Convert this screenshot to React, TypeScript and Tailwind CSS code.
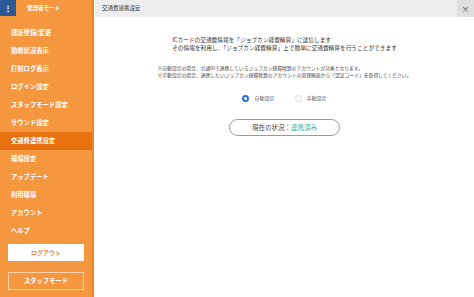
import * as React from "react";

const menuItems = [
    "認証登録/変更",
    "勤務状況表示",
    "打刻ログ表示",
    "ログイン設定",
    "スタッフモード設定",
    "サウンド設定",
    "交通費連携設定",
    "環境設定",
    "アップデート",
    "利用環境",
    "アカウント",
    "ヘルプ",
];

const ACTIVE = "交通費連携設定";

const Radio: React.FC<{ checked: boolean; label: string }> = ({ checked, label }) => (
    <div className="flex items-center gap-[5px]">
        {checked ? (
            <span className="w-[7px] h-[7px] rounded-full border-[2px] border-[#2a72d0] bg-white" />
        ) : (
            <span className="w-[7px] h-[7px] rounded-full border border-[#d6d6d6] bg-white" />
        )}
        <span className="text-[5px] leading-[8px] text-[#555]">{label}</span>
    </div>
);

export default function App() {
    return (
        <div
            className="w-[474px] h-[297px] flex overflow-hidden bg-white"
            style={{ fontFamily: '"Noto Sans CJK JP", "Noto Sans", sans-serif' }}
        >
            {/* sidebar */}
            <div className="w-[94px] h-full flex flex-col bg-[#f5973f] border-r-2 border-[#e9852c]">
                <div className="h-[16px] flex items-center">
                    <div className="w-[16px] h-[16px] bg-[#2d5896] flex items-center justify-center text-white text-[8px] leading-none font-bold">
                        ⋮
                    </div>
                    <span className="ml-[11px] text-[5.5px] text-white font-bold">管理者モード</span>
                </div>
                <div className="pt-[8px] flex flex-col">
                    {menuItems.map((item) => (
                        <div
                            key={item}
                            className={
                                "h-[18px] flex items-center pl-[11px] text-[6.3px] text-white font-bold " +
                                (item === ACTIVE ? "bg-[#e7700f]" : "")
                            }
                        >
                            {item}
                        </div>
                    ))}
                </div>
                <div className="mt-[4px] mx-[8px] h-[17px] bg-white flex items-center justify-center text-[6px] text-[#f08a2e] font-bold">
                    ログアウト
                </div>
                <div className="mt-[11px] mx-[8px] h-[18px] border border-[#fcd3ad] flex items-center justify-center text-[6.3px] text-white font-bold">
                    スタッフモード
                </div>
            </div>

            {/* content */}
            <div className="flex-1 flex flex-col ml-[1px]">
                <div className="h-[17px] bg-[#ededed] flex items-center justify-between">
                    <span className="pl-[7px] text-[5.5px] text-[#333]">交通費連携設定</span>
                    <div className="w-[17px] h-[17px] bg-[#dedede] flex items-center justify-center text-[8px] text-[#444] leading-none">
                        ×
                    </div>
                </div>
                <div className="flex flex-col items-center">
                    <div className="mt-[19px] text-[5.7px] leading-[8px] text-[#333] text-left">
                        <div>ICカードの交通費情報を「ジョブカン経費精算」に送信します</div>
                        <div>その情報を利用し、「ジョブカン経費精算」上で簡単に交通費精算を行うことができます</div>
                    </div>
                    <div className="mt-[12px] text-[4.8px] leading-[7px] text-[#444] text-left">
                        <div>※自動設定の場合、共通IDで連携しているジョブカン経費精算のアカウントが対象となります。</div>
                        <div>※手動設定の場合、連携したいジョブカン経費精算のアカウントの管理画面から「認証コード」を取得してください。</div>
                    </div>
                    <div className="mt-[16px] flex items-center gap-[20px]">
                        <Radio checked label="自動設定" />
                        <Radio checked={false} label="手動設定" />
                    </div>
                    <div className="mt-[17px] w-[111px] h-[17px] rounded-full border border-[#9a9a9a] flex items-center justify-center text-[6.5px] text-[#444]">
                        <span>現在の状況：</span>
                        <span className="text-[#26b39d]">連携済み</span>
                    </div>
                </div>
            </div>
        </div>
    );
}
